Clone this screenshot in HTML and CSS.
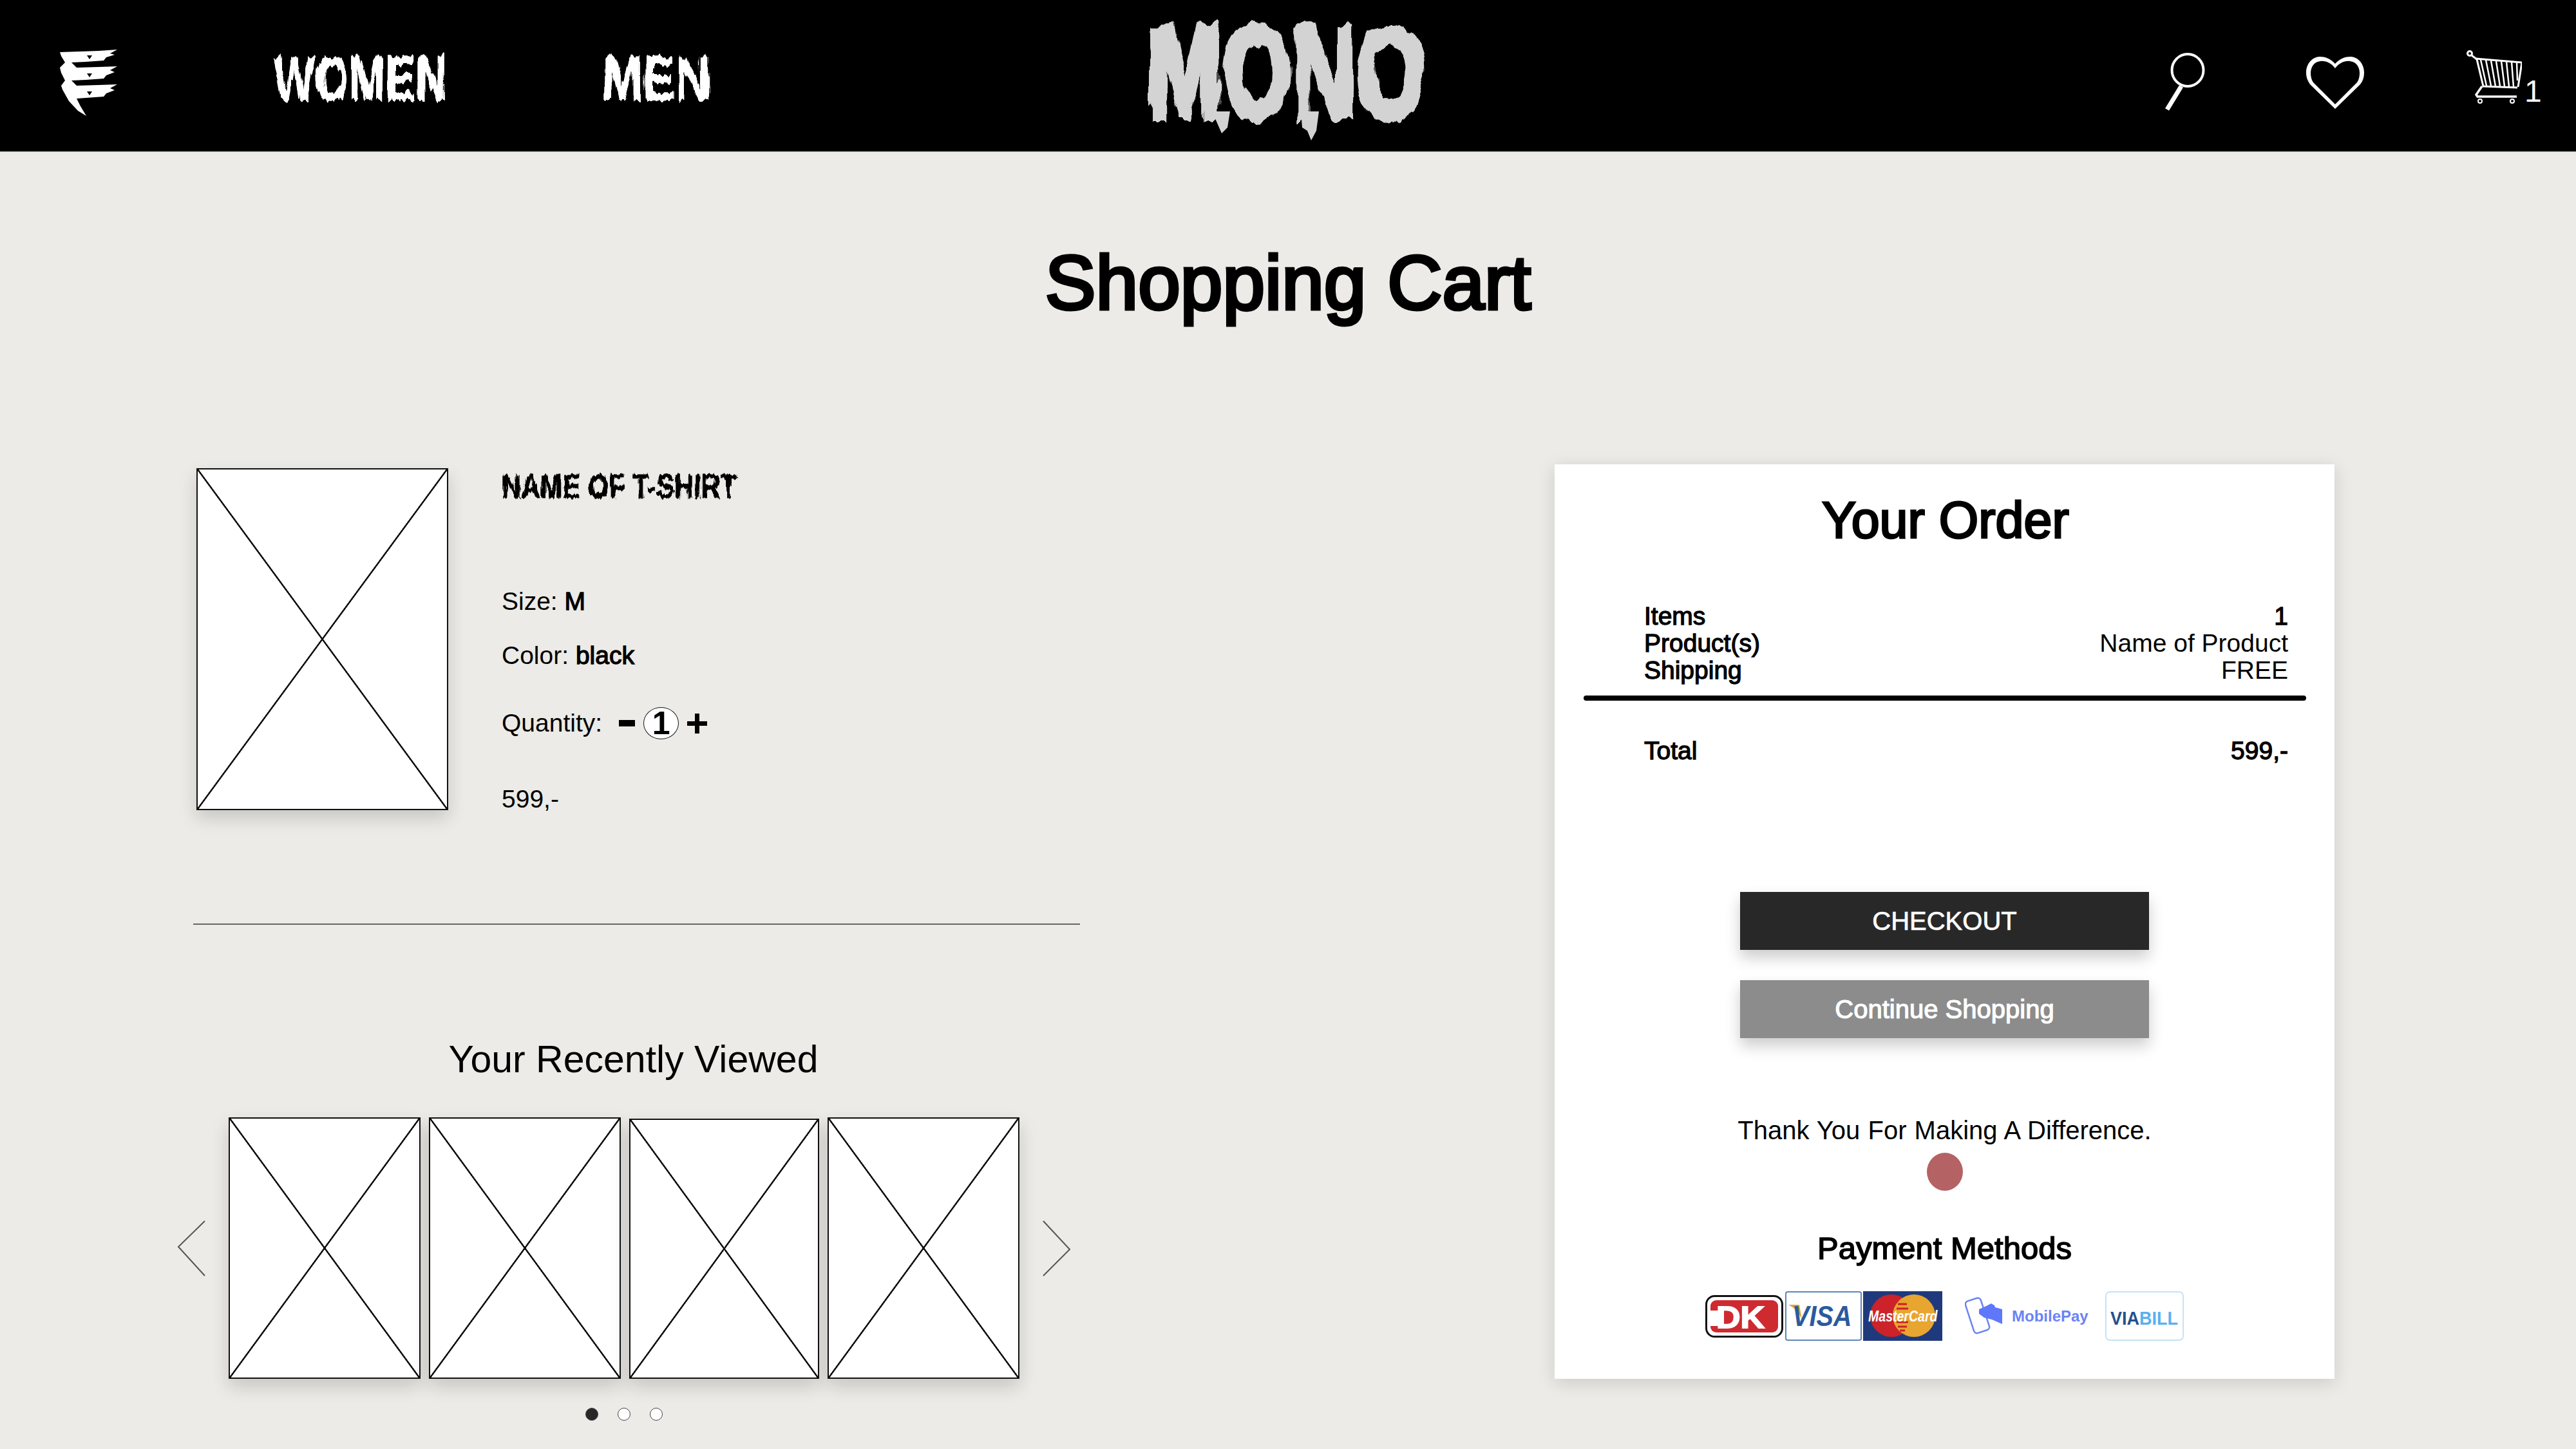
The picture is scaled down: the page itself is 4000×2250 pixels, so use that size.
FILE: index.html
```html
<!DOCTYPE html>
<html>
<head>
  <meta charset="UTF-8">
  <title>Shopping Cart</title>
  <link rel="stylesheet" href="styles.css">
</head>
<body>
  <!-- rough edges for the brush lettering -->
  <svg class="defs" width="0" height="0">
    <filter id="brush" x="-10%" y="-30%" width="120%" height="160%" color-interpolation-filters="sRGB">
      <feTurbulence type="fractalNoise" baseFrequency="0.09 0.012" numOctaves="3" seed="4"/>
      <feDisplacementMap in="SourceGraphic" scale="18" xChannelSelector="R" yChannelSelector="G"/>
    </filter>
    <filter id="brush-big" x="-10%" y="-30%" width="120%" height="160%" color-interpolation-filters="sRGB">
      <feTurbulence type="fractalNoise" baseFrequency="0.035 0.012" numOctaves="3" seed="9"/>
      <feDisplacementMap in="SourceGraphic" scale="26" xChannelSelector="R" yChannelSelector="G"/>
    </filter>
    <filter id="brush-small" x="-5%" y="-30%" width="110%" height="160%" color-interpolation-filters="sRGB">
      <feTurbulence type="fractalNoise" baseFrequency="0.2 0.05" numOctaves="2" seed="2"/>
      <feDisplacementMap in="SourceGraphic" scale="9" xChannelSelector="R" yChannelSelector="G"/>
    </filter>
  </svg>

  <header class="topbar">
    <svg class="menu-icon" width="89" height="103" viewBox="0 0 89 103">
      <path fill="#fff" fill-rule="evenodd" d="M0 4 L30 3 L60 2 L89 0 L78 6 L85 8 L72 12 L68 17 L40 19 L18 20 L26 28 L60 27 L89 26 L78 32 L85 35 L72 40 L68 45 L40 47 L18 48 L26 56 L60 55 L89 54 L78 60 L85 63 L72 68 L68 73 L40 75 L26 76 L32 88 L41 103 L28 95 L14 80 L4 62 L2 56 L8 48 L2 36 L0 28 L8 20 L2 10 Z M42 9 L50 9 L46 15 Z M42 37 L50 37 L46 43 Z M42 65 L50 65 L46 71 Z"/>
    </svg>
    <nav class="nav">
      <svg class="nav-link" width="269" height="90"><text class="brush-text" transform="translate(0 72) scale(0.71 1)" font-size="96">WOMEN</text></svg>
      <svg class="nav-link" width="169" height="90"><text class="brush-text" transform="translate(0 72) scale(0.79 1)" font-size="96">MEN</text></svg>
    </nav>
    <svg class="logo" width="435" height="205">
      <text class="brush-text logo-text" transform="translate(0 168) scale(0.7 1)" font-size="198">MONO</text>
      <path class="logo-drip" d="M100 160 L128 160 L124 185 L115 194 L108 178 Z M238 160 L266 160 L262 190 L254 205 L248 190 L240 185 Z"/>
    </svg>
    <div class="top-icons">
      <svg class="icon-search" width="65" height="92" viewBox="0 0 65 92">
        <ellipse cx="37" cy="29" rx="24.5" ry="25" fill="none" stroke="#fff" stroke-width="4"/>
        <path d="M27 54 L5 90" stroke="#fff" stroke-width="7" fill="none"/>
      </svg>
      <svg class="icon-heart" width="90" height="81" viewBox="0 0 90 81">
        <path fill="#fff" fill-rule="evenodd" d="M45 11 C38 3 29 0 21 0 C8 1 0 12 0 25 C0 33 3 38 6 43 L45 81 L84 43 C88 38 90 32 90 25 C90 12 82 1 69 0 C61 0 52 3 45 11 Z M45 18 C38 9 30 6 22 7 C12 8 7 16 7 26 C7 32 9 37 11 40 L45 74 L79 40 C81 37 83 32 83 26 C83 16 78 8 68 7 C60 6 52 9 45 18 Z"/>
      </svg>
      <svg class="icon-cart" width="86" height="84" viewBox="0 0 86 84">
        <g fill="none" stroke="#fff">
          <circle cx="5" cy="6" r="3.5" stroke-width="3"/>
          <path d="M8 9 L16 15 L26 57 L79 59" stroke-width="3"/>
          <path d="M14 14 L86 20 L80 58" stroke-width="3"/>
          <path d="M22 16 L31 56 M30 16 L38 56 M38 17 L45 57 M46 18 L52 57 M54 18 L59 57 M62 19 L66 58 M70 19 L73 58 M78 20 L79 48" stroke-width="2.5"/>
          <path d="M24 57 L15 70 L17 73 L78 73" stroke-width="3.5"/>
          <circle cx="21" cy="80" r="3" stroke-width="2"/>
          <circle cx="71" cy="80" r="3" stroke-width="2"/>
        </g>
      </svg>
      <span class="cart-count">1</span>
    </div>
  </header>

  <h1 class="page-title">Shopping Cart</h1>

  <main class="layout">
    <section class="left">
      <div class="product">
        <div class="placeholder product-img"></div>
        <div class="product-info">
          <svg class="product-name" width="366" height="60"><text class="brush-text" transform="translate(0 46) scale(0.8 1)" font-size="52">NAME OF T-SHIRT</text></svg>
          <div class="info-line size-line">Size: <b>M</b></div>
          <div class="info-line color-line">Color: <b>black</b></div>
          <div class="info-line qty-line">
            Quantity:
            <span class="qty-minus"></span>
            <span class="qty-value">1</span>
            <span class="qty-plus"></span>
          </div>
          <div class="info-line price-line">599,-</div>
        </div>
      </div>

      <hr class="divider">

      <h2 class="recent-title">Your Recently Viewed</h2>
      <div class="carousel-wrap">
        <div class="carousel">
          <svg class="arrow" width="44" height="87" viewBox="0 0 44 87"><polyline points="43,1 2,41 43,86" fill="none" stroke="#555" stroke-width="2"/></svg>
          <div class="thumbs">
            <div class="placeholder thumb"></div>
            <div class="placeholder thumb"></div>
            <div class="placeholder thumb thumb-short"></div>
            <div class="placeholder thumb"></div>
          </div>
          <svg class="arrow" width="44" height="87" viewBox="0 0 44 87"><polyline points="1,1 42,45 1,86" fill="none" stroke="#555" stroke-width="2"/></svg>
        </div>
        <div class="dots">
          <span class="dot active"></span>
          <span class="dot"></span>
          <span class="dot"></span>
        </div>
      </div>
    </section>

    <aside class="order-card">
      <h2 class="order-title">Your Order</h2>
      <div class="order-rows">
        <div class="row"><span class="strong">Items</span><span class="strong">1</span></div>
        <div class="row"><span class="strong">Product(s)</span><span>Name of Product</span></div>
        <div class="row"><span class="strong">Shipping</span><span>FREE</span></div>
      </div>
      <div class="order-rule"></div>
      <div class="order-rows total">
        <div class="row"><span class="strong">Total</span><span class="strong">599,-</span></div>
      </div>
      <button class="btn btn-dark">CHECKOUT</button>
      <button class="btn btn-grey">Continue Shopping</button>
      <p class="thanks">Thank You For Making A Difference.</p>
      <div class="thanks-dot"></div>
      <h3 class="pay-title">Payment Methods</h3>
      <div class="pay-logos">
        <svg class="pay-dk" width="121" height="66" viewBox="0 0 121 66">
          <rect x="1.5" y="1.5" width="118" height="63" rx="13" fill="#fff" stroke="#111" stroke-width="3"/>
          <rect x="8" y="8" width="105" height="50" rx="9" fill="#cf2a30"/>
          <rect x="8" y="24" width="20" height="24" fill="#fff"/>
          <text class="pay-dk-text" transform="translate(17 51) scale(1.04 0.95)" font-size="50">DK</text>
        </svg>
        <svg class="pay-visa" width="119" height="77" viewBox="0 0 119 77">
          <rect x="1" y="1" width="117" height="75" rx="3" fill="#fff" stroke="#5f86b8" stroke-width="2"/>
          <path d="M5 21 L22 21 L26 44 C22 34 15 26 5 21 Z" fill="#e2a32f"/>
          <text class="pay-visa-text" transform="translate(11 54) scale(0.9 1)" font-size="44">VISA</text>
        </svg>
        <svg class="pay-mc" width="123" height="77" viewBox="0 0 123 77">
          <rect width="123" height="77" fill="#1f3a7c"/>
          <circle cx="44" cy="38" r="33" fill="#cc2229"/>
          <circle cx="79" cy="38" r="33" fill="#e8a52f"/>
          <path d="M54 20 H68 M52 27 H70 M52 48 H70 M54 55 H68 M57 61 H65" stroke="#cc2229" stroke-width="3"/>
          <text class="pay-mc-text" transform="translate(8 47) scale(0.85 1)" font-size="23">MasterCard</text>
        </svg>
        <svg class="pay-mobile" width="193" height="61" viewBox="0 0 193 61">
          <rect x="7" y="4" width="25" height="52" rx="5" fill="none" stroke="#6b83f5" stroke-width="2.5" transform="rotate(-18 19 30)"/>
          <path d="M22 20 L31 16 L41 11 L46 14 L47 17 L58 20 L58 43 L42 36 L30 33 L22 27 Z" fill="#5f78fb"/>
          <text class="pay-mobile-text" x="73" y="39" font-size="24">MobilePay</text>
        </svg>
        <svg class="pay-via" width="122" height="77" viewBox="0 0 122 77">
          <rect x="1" y="1" width="120" height="75" rx="6" fill="#fff" stroke="#c7e2f6" stroke-width="2"/>
          <text class="pay-via-text" transform="translate(8 52) scale(0.9 1)" font-size="30"><tspan fill="#23508f">VIA</tspan><tspan fill="#5ab1ee">BILL</tspan></text>
        </svg>
      </div>
    </aside>
  </main>
</body>
</html>
```
FILE: styles.css
```css
* {
  box-sizing: border-box;
}
body {
  margin: 0;
  background: #ecebe7;
  color: #000;
  font-family: "Liberation Sans", Arial, sans-serif;
  font-size: 39px;
}
.defs {
  position: absolute;
}

/* top bar */
.topbar {
  display: flex;
  align-items: flex-start;
  height: 236px;
  padding-left: 93px;
  background: #000;
  border-bottom: 1px solid #aaa;
}
.menu-icon {
  margin-top: 77px;
}
.nav {
  display: flex;
  margin-left: 243px;
  margin-top: 83px;
  gap: 241px;
}
.nav-link {
  overflow: visible;
}
.brush-text {
  font-family: "Liberation Sans", Arial, sans-serif;
  font-weight: bold;
  fill: #fff;
  stroke: #fff;
  stroke-width: 2px;
  filter: url(#brush);
}
.logo {
  margin-top: 13px;
  margin-left: 678px;
  overflow: visible;
}
.logo-text {
  fill: #d3d3d3;
  stroke: #d3d3d3;
  stroke-width: 12px;
  filter: url(#brush-big);
}
.logo-drip {
  fill: #d3d3d3;
}
.top-icons {
  display: flex;
  align-items: flex-start;
  margin-left: 1143px;
}
.icon-search {
  margin-top: 80px;
}
.icon-heart {
  margin-top: 88px;
  margin-left: 156px;
}
.icon-cart {
  margin-top: 77px;
  margin-left: 159px;
}
.cart-count {
  margin-top: 115px;
  margin-left: 4px;
  font-size: 48px;
  font-weight: normal;
  line-height: 54px;
  color: #fff;
}

.page-title {
  margin: 133px 0 0;
  font-size: 118px;
  font-weight: normal;
  line-height: 140px;
  text-align: center;
  -webkit-text-stroke: 5px #000;
}

.layout {
  display: flex;
  align-items: flex-start;
  margin-top: 212px;
  padding: 0 375px 0 300px;
}

/* left column */
.left {
  width: 1377px;
}
.product {
  display: flex;
  height: 537px;
  padding: 6px 0 0 5px;
}
.placeholder {
  border: 2px solid #111;
  background:
    linear-gradient(to top right, transparent calc(50% - 1.5px), #111 calc(50% - 1px), #111 calc(50% + 1px), transparent calc(50% + 1.5px)),
    linear-gradient(to bottom right, transparent calc(50% - 1.5px), #111 calc(50% - 1px), #111 calc(50% + 1px), transparent calc(50% + 1.5px)),
    #fff;
  box-shadow: 0 12px 26px rgba(0, 0, 0, 0.16);
}
.product-img {
  width: 391px;
  height: 531px;
}
.product-info {
  margin-left: 83px;
}
.product-name {
  display: block;
  overflow: visible;
}
.product-name .brush-text {
  fill: #000;
  stroke: #000;
  stroke-width: 1px;
  filter: url(#brush-small);
}
.info-line {
  line-height: 46px;
  white-space: nowrap;
}
.info-line b {
  font-weight: normal;
  -webkit-text-stroke: 1.3px #000;
}
.size-line {
  margin-top: 124px;
}
.color-line {
  margin-top: 38px;
}
.qty-line {
  display: flex;
  align-items: center;
  margin-top: 57px;
}
.price-line {
  margin-top: 70px;
}
.qty-minus {
  width: 25px;
  height: 10px;
  margin-left: 26px;
  background: #000;
}
.qty-value {
  width: 55px;
  height: 50px;
  margin-left: 13px;
  border: 1px solid #111;
  border-radius: 50%;
  background: #fff;
  font-size: 50px;
  font-weight: bold;
  line-height: 48px;
  text-align: center;
}
.qty-plus {
  width: 31px;
  height: 31px;
  margin-left: 13px;
  background:
    linear-gradient(#000, #000) center / 31px 7px no-repeat,
    linear-gradient(#000, #000) center / 7px 31px no-repeat;
}
.divider {
  height: 2px;
  margin: 176px 0 0;
  border: 0;
  background: #666;
}
.recent-title {
  margin: 174px 10px 0 0;
  font-size: 59px;
  font-weight: normal;
  line-height: 70px;
  text-align: center;
}
.carousel-wrap {
  width: 1388px;
  margin: 55px 0 0 -25px;
}
.carousel {
  display: flex;
  align-items: center;
  justify-content: space-between;
}
.thumbs {
  display: flex;
  align-items: flex-end;
  gap: 13px;
}
.thumb {
  width: 298px;
  height: 406px;
}
.thumb-short {
  width: 295px;
  height: 404px;
}
.dots {
  display: flex;
  justify-content: center;
  gap: 30px;
  margin-top: 45px;
}
.dot {
  width: 20px;
  height: 20px;
  border: 1px solid #444;
  border-radius: 50%;
  background: #fff;
}
.dot.active {
  background: #282828;
}

/* order card */
.order-card {
  display: flex;
  flex-direction: column;
  width: 1211px;
  height: 1420px;
  margin-left: auto;
  padding-top: 42px;
  background: #fff;
  box-shadow: 0 6px 26px rgba(0, 0, 0, 0.14);
}
.order-title {
  margin: 0 0 0 3px;
  font-size: 79px;
  font-weight: normal;
  line-height: 90px;
  text-align: center;
  -webkit-text-stroke: 3px #000;
}
.order-rows {
  margin-top: 83px;
  padding: 0 72px 0 139px;
  line-height: 42px;
}
.row {
  display: flex;
  justify-content: space-between;
}
.strong {
  -webkit-text-stroke: 1.3px #000;
}
.order-rule {
  height: 8px;
  margin: 18px 44px 0 45px;
  border-radius: 4px;
  background: #000;
}
.total {
  margin-top: 57px;
}
.btn {
  display: block;
  width: 635px;
  height: 90px;
  margin-left: 288px;
  border: 0;
  font-family: inherit;
  font-size: 40px;
  color: #fff;
  box-shadow: 0 12px 22px rgba(0, 0, 0, 0.2);
}
.btn-dark {
  margin-top: 198px;
  background: #282828;
  -webkit-text-stroke: 0.7px #fff;
}
.btn-grey {
  margin-top: 47px;
  background: #8c8c8c;
  -webkit-text-stroke: 1.2px #fff;
}
.thanks {
  margin: 120px 0 0;
  font-size: 40px;
  line-height: 46px;
  text-align: center;
  word-spacing: 1px;
}
.thanks-dot {
  width: 56px;
  height: 59px;
  margin: 12px 0 0 578px;
  border-radius: 50%;
  background: #b56264;
}
.pay-title {
  margin: 61px 0 0;
  font-size: 49px;
  font-weight: normal;
  line-height: 56px;
  text-align: center;
  -webkit-text-stroke: 1.6px #000;
}
.pay-logos {
  display: flex;
  align-items: center;
  height: 77px;
  margin: 39px 0 0 234px;
}
.pay-visa {
  margin-left: 3px;
}
.pay-mc {
  margin-left: 2px;
}
.pay-mobile {
  margin-left: 35px;
}
.pay-via {
  margin-left: 25px;
}
.pay-dk-text {
  font-weight: bold;
  font-family: "Liberation Sans", sans-serif;
  fill: #fff;
  stroke: #fff;
  stroke-width: 2px;
}
.pay-visa-text {
  font-family: "Liberation Sans", sans-serif;
  font-weight: bold;
  font-style: italic;
  fill: #2a5a9e;
}
.pay-mc-text {
  font-family: "Liberation Sans", sans-serif;
  font-weight: bold;
  font-style: italic;
  fill: #fff;
}
.pay-mobile-text {
  font-family: "Liberation Sans", sans-serif;
  font-weight: bold;
  fill: #6b83f5;
}
.pay-via-text {
  font-family: "Liberation Sans", sans-serif;
  font-weight: bold;
}
```
